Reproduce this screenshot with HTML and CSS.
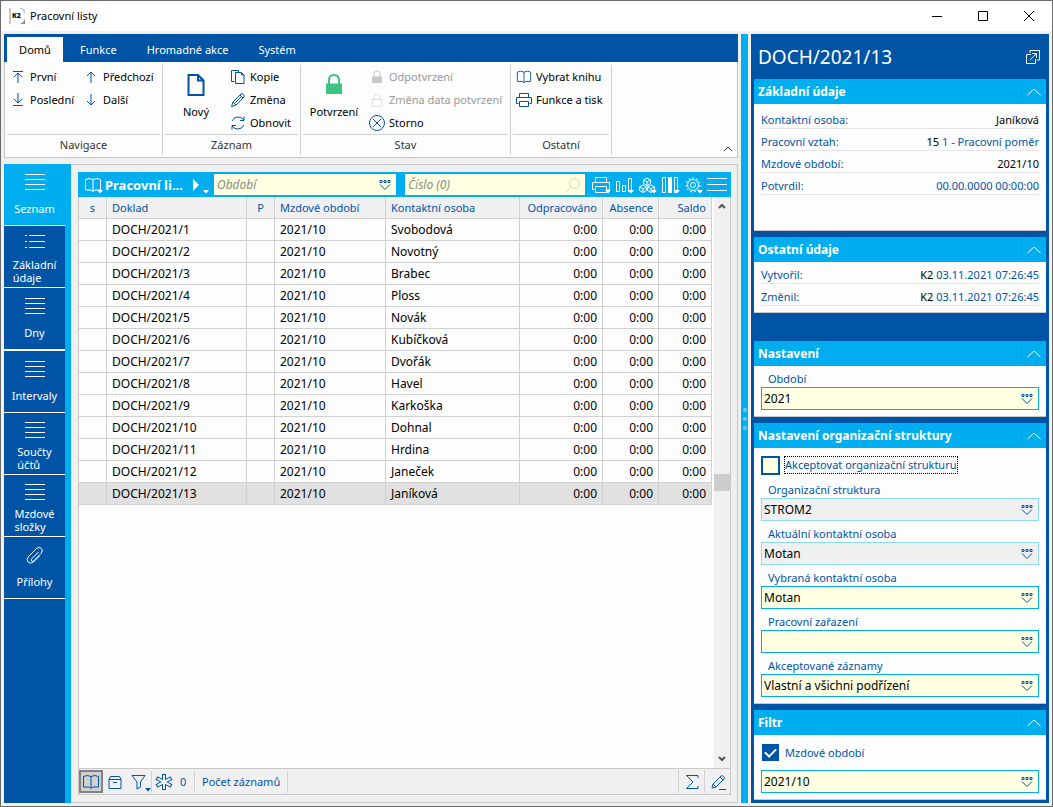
FILE: index.html
```html
<!DOCTYPE html>
<html lang="cs">
<head>
<meta charset="utf-8">
<title>Pracovní listy</title>
<link rel="stylesheet" href="styles.css">
</head>
<body>
<svg class="defs" aria-hidden="true">
  <symbol id="i-lookup" viewBox="0 0 14 12"><path d="M2 1.500h2v2H2zM6 1.500h2v2H6zM10 1.500h2v2h-2z"/><path d="M2 5.500 7 10.500l5-5"/></symbol>
  <symbol id="i-book" viewBox="0 0 18 16"><path d="M9 2.500Q5 .5 1.500 2.500v10.500h5.500l2 1.500 2-1.500h5.500V2.500Q13 .5 9 2.500zV14"/></symbol>
  <symbol id="i-lines" viewBox="0 0 20 18"><path d="M0 1.500h20M0 6.500h20M0 11.500h20M0 16.500h20"/></symbol>
  <symbol id="i-up" viewBox="0 0 16 10"><path d="M1.500 8 8 2l6.500 6"/></symbol>
  <symbol id="i-drop" viewBox="0 0 6 4"><path class="solid" d="M0 0h6L3 3.500z"/></symbol>
</svg>
<div class="window">
  <header class="titlebar">
    <svg class="logo" viewBox="0 0 16 16"><path fill="#c9c9c9" d="M0 0h2v16H0zM10 0q5 2 5 6l1-1V2l-3-2zM16 9v7h-5q4-2 5-7z"/><path fill="#8a8a8a" d="M16 11v5h-5q4-1 5-5z"/><text x="3" y="10" class="logo-text">K2</text></svg>
    <h1 class="title">Pracovní listy</h1>
    <button class="winbtn" aria-label="Minimalizovat"><svg viewBox="0 0 12 12"><path d="M1 6.500h10"/></svg></button>
    <button class="winbtn" aria-label="Maximalizovat"><svg viewBox="0 0 12 12"><path d="M1.500 1.500h9v9h-9z"/></svg></button>
    <button class="winbtn" aria-label="Zavřít"><svg viewBox="0 0 12 12"><path d="m1 1 10 10M11 1 1 11"/></svg></button>
  </header>
  <div class="content">
    <div class="left">
      <nav class="tabs">
        <button class="tab active">Domů</button><button class="tab">Funkce</button><button class="tab">Hromadné akce</button><button class="tab">Systém</button>
      </nav>
      <div class="ribbon">
        <section class="group g-nav">
          <div class="tools">
            <div class="stack">
              <button class="tool"><svg class="i16" viewBox="0 0 16 16"><path d="M3 2.500h10M8 14V4M4 8l4-4 4 4"/></svg>První</button>
              <button class="tool"><svg class="i16" viewBox="0 0 16 16"><path d="M3 13.500h10M8 1v10M4 7l4 4 4-4"/></svg>Poslední</button>
            </div>
            <div class="stack">
              <button class="tool"><svg class="i16" viewBox="0 0 16 16"><path d="M8 14V3M4 7l4-4 4 4"/></svg>Předchozí</button>
              <button class="tool"><svg class="i16" viewBox="0 0 16 16"><path d="M8 2v11M4 9l4 4 4-4"/></svg>Další</button>
            </div>
          </div>
          <h2 class="caption">Navigace</h2>
        </section>
        <section class="group g-rec">
          <div class="tools">
            <button class="big"><svg class="i24 bold" viewBox="0 0 24 24"><path d="M4.500 2H14l5.500 5.500V22h-15zM14 2v5.500h5.500"/></svg>Nový</button>
            <div class="stack">
              <button class="tool"><svg class="i16" viewBox="0 0 16 16"><path d="M4.500 12.500h-3v-11h7v2M5.500 3.500h6l2.500 2.500v8.500H5.500zM11.500 3.500V6H14"/></svg>Kopie</button>
              <button class="tool"><svg class="i16" viewBox="0 0 16 16"><path d="m1.500 14.500 1.500-4.500 8-8q1-1 2.500.5t.5 2.500l-8 8zM3 10l3 3M10 3l3 3M5 11l6-6"/></svg>Změna</button>
              <button class="tool"><svg class="i16" viewBox="0 0 16 16"><path d="M2 6q2-4 6-4t6 3M14 1.500V5.500h-4M14 10q-2 4-6 4t-6-3M2 14.500V10.500h4"/></svg>Obnovit</button>
            </div>
          </div>
          <h2 class="caption">Záznam</h2>
        </section>
        <section class="group g-state">
          <div class="tools">
            <button class="big"><svg class="i24 lock" viewBox="0 0 24 24"><path d="M7 11V7q0-5 5-5t5 5v4"/><path class="solid" d="M4 10.500h16V21H4z"/></svg>Potvrzení</button>
            <div class="stack">
              <button class="tool off" disabled><svg class="i16" viewBox="0 0 16 16"><path d="M5 8V5q0-3 3-3t3 3v3"/><path class="solid" d="M3 7.500h10V14H3z"/></svg>Odpotvrzení</button>
              <button class="tool off" disabled><svg class="i16 faint" viewBox="0 0 16 16"><path d="M5 8V5q0-3 3-3t3 3v3M3 7.500h10V14H3z"/></svg>Změna data potvrzení</button>
              <button class="tool"><svg class="i16" viewBox="0 0 16 16"><circle cx="8" cy="8" r="7.500"/><path d="m4 4 8 8M12 4l-8 8"/></svg>Storno</button>
            </div>
          </div>
          <h2 class="caption">Stav</h2>
        </section>
        <section class="group g-other">
          <div class="tools">
            <div class="stack">
              <button class="tool"><svg class="i16"><use href="#i-book"/></svg>Vybrat knihu</button>
              <button class="tool"><svg class="i16" viewBox="1 0 16 16"><path d="M4.500 5V1.500h9V5M3.500 11.500h-2V5.500h15v6h-2M4.500 9.500h9v5h-9z"/></svg>Funkce a tisk</button>
            </div>
          </div>
          <h2 class="caption">Ostatní</h2>
        </section>
        <button class="collapse" aria-label="Sbalit"><svg viewBox="0 0 10 6"><path d="m1 5 4-4 4 4"/></svg></button>
      </div>
      <div class="work">
        <nav class="side">
          <button class="nav current"><svg><use href="#i-lines"/></svg><span>Seznam</span></button>
          <button class="nav two"><svg viewBox="0 0 20 18"><path d="M0 1.500h2M4 1.500h16M0 7.500h2M4 7.500h16M0 13.500h2M4 13.500h16"/></svg><span>Základní<br>údaje</span></button>
          <button class="nav wide"><svg><use href="#i-lines"/></svg><span>Dny</span></button>
          <button class="nav"><svg><use href="#i-lines"/></svg><span>Intervaly</span></button>
          <button class="nav two"><svg><use href="#i-lines"/></svg><span>Součty<br>účtů</span></button>
          <button class="nav two"><svg><use href="#i-lines"/></svg><span>Mzdové<br>složky</span></button>
          <button class="nav clip"><svg viewBox="0 0 20 20"><path d="m13.500 6-6.500 6.500q-1.500 1.500-.5 2.500t2.500-.5l7-7q2.500-2.500.5-5t-5 0l-8 8q-2.500 3-.5 5.500t5.500 0l6-6"/></svg><span>Přílohy</span></button>
        </nav>
        <main class="panel">
          <div class="grid">
            <div class="gridbar">
              <button class="gb" aria-label="Kniha"><svg viewBox="0 0 18 16"><use href="#i-book"/></svg><svg class="dd"><use href="#i-drop"/></svg></button>
              <strong class="gridname">Pracovní li...</strong>
              <button class="gb" aria-label="Spustit"><svg viewBox="0 0 18 16"><path class="solid" d="M3 2l6 6-6 6z"/></svg><svg class="dd"><use href="#i-drop"/></svg></button>
              <div class="search s1"><input aria-label="Období" placeholder="Období"><button aria-label="Vybrat"><svg class="look"><use href="#i-lookup"/></svg></button></div>
              <div class="search s2"><input aria-label="Číslo" placeholder="Číslo (0)"><button aria-label="Hledat"><svg class="mag" viewBox="0 0 16 16"><circle cx="9.500" cy="6.500" r="5"/><path d="m6 10-5 5"/></svg></button></div>
              <div class="gbs">
                <button class="gb print" aria-label="Tisk"><svg viewBox="0 0 20 18"><path d="M4.500 6V1.500h11V6M3.500 13.500h-2V6.500h17v7h-2M4.500 10.500h11v6h-11z"/></svg><svg class="dd"><use href="#i-drop"/></svg></button>
                <button class="gb" aria-label="Graf"><svg viewBox="0 0 18 16"><path d="M1.500 4.500h3v10h-3zM7.500 8.500h3v6h-3zM13.500 1.500h3v13h-3z"/></svg><svg class="dd"><use href="#i-drop"/></svg></button>
                <button class="gb" aria-label="Kostky"><svg viewBox="0 0 18 16"><path d="m9 1 3.500 2v3.500L9 8.500l-3.500-2V3zM5.500 3 9 5l3.500-2M9 5v3.500M5 8l3.500 2v3.500L5 15.500l-3.500-2V10zM1.500 10 5 12l3.500-2M5 12v3.500M13 8l3.500 2v3.500l-3.500 2-3.500-2V10zM9.500 10l3.500 2 3.500-2M13 12v3.500"/></svg><svg class="dd"><use href="#i-drop"/></svg></button>
                <button class="gb" aria-label="Sloupce"><svg viewBox="0 0 18 16"><path d="M1.500.5h3v15h-3zM13.500.5h3v15h-3z"/><path class="solid" d="M7 0h4v16H7z"/></svg><svg class="dd"><use href="#i-drop"/></svg></button>
                <button class="gb" aria-label="Nastavení"><svg viewBox="0 0 18 16"><circle cx="9" cy="8" r="5.500"/><circle cx="9" cy="8" r="2.500"/><circle class="teeth" cx="9" cy="8" r="7"/></svg><svg class="dd"><use href="#i-drop"/></svg></button>
                <button class="gb menu" aria-label="Menu"><svg viewBox="0 0 20 16"><path d="M0 1.500h20M0 7.500h20M0 13.500h20"/></svg></button>
              </div>
            </div>
            <div class="gridbody">
              <div class="tablewrap">
                <table>
                  <colgroup><col class="c1"><col class="c2"><col class="c3"><col class="c4"><col class="c5"><col class="c6"><col class="c7"><col class="c8"></colgroup>
                  <thead><tr><th class="mid">s</th><th>Doklad</th><th class="mid">P</th><th>Mzdové období</th><th>Kontaktní osoba</th><th class="num">Odpracováno</th><th class="num">Absence</th><th class="num">Saldo</th></tr></thead>
                  <tbody>
                    <tr><td></td><td>DOCH/2021/1</td><td></td><td>2021/10</td><td>Svobodová</td><td class="num">0:00</td><td class="num">0:00</td><td class="num">0:00</td></tr>
                    <tr><td></td><td>DOCH/2021/2</td><td></td><td>2021/10</td><td>Novotný</td><td class="num">0:00</td><td class="num">0:00</td><td class="num">0:00</td></tr>
                    <tr><td></td><td>DOCH/2021/3</td><td></td><td>2021/10</td><td>Brabec</td><td class="num">0:00</td><td class="num">0:00</td><td class="num">0:00</td></tr>
                    <tr><td></td><td>DOCH/2021/4</td><td></td><td>2021/10</td><td>Ploss</td><td class="num">0:00</td><td class="num">0:00</td><td class="num">0:00</td></tr>
                    <tr><td></td><td>DOCH/2021/5</td><td></td><td>2021/10</td><td>Novák</td><td class="num">0:00</td><td class="num">0:00</td><td class="num">0:00</td></tr>
                    <tr><td></td><td>DOCH/2021/6</td><td></td><td>2021/10</td><td>Kubíčková</td><td class="num">0:00</td><td class="num">0:00</td><td class="num">0:00</td></tr>
                    <tr><td></td><td>DOCH/2021/7</td><td></td><td>2021/10</td><td>Dvořák</td><td class="num">0:00</td><td class="num">0:00</td><td class="num">0:00</td></tr>
                    <tr><td></td><td>DOCH/2021/8</td><td></td><td>2021/10</td><td>Havel</td><td class="num">0:00</td><td class="num">0:00</td><td class="num">0:00</td></tr>
                    <tr><td></td><td>DOCH/2021/9</td><td></td><td>2021/10</td><td>Karkoška</td><td class="num">0:00</td><td class="num">0:00</td><td class="num">0:00</td></tr>
                    <tr><td></td><td>DOCH/2021/10</td><td></td><td>2021/10</td><td>Dohnal</td><td class="num">0:00</td><td class="num">0:00</td><td class="num">0:00</td></tr>
                    <tr><td></td><td>DOCH/2021/11</td><td></td><td>2021/10</td><td>Hrdina</td><td class="num">0:00</td><td class="num">0:00</td><td class="num">0:00</td></tr>
                    <tr><td></td><td>DOCH/2021/12</td><td></td><td>2021/10</td><td>Janeček</td><td class="num">0:00</td><td class="num">0:00</td><td class="num">0:00</td></tr>
                    <tr class="selected"><td></td><td>DOCH/2021/13</td><td></td><td>2021/10</td><td>Janíková</td><td class="num">0:00</td><td class="num">0:00</td><td class="num">0:00</td></tr>
                  </tbody>
                </table>
              </div>
              <div class="scroll">
                <svg viewBox="0 0 8 6"><path d="m1 5 3-3 3 3"/></svg>
                <div class="track"><div class="before"></div><div class="thumb"></div><div class="after"></div></div>
                <svg viewBox="0 0 8 6"><path d="m1 1 3 3 3-3"/></svg>
              </div>
            </div>
            <footer class="status">
              <button class="sb pressed" aria-label="Kniha"><svg viewBox="0 0 18 16"><use href="#i-book"/></svg></button>
              <button class="sb" aria-label="Kontejner"><svg viewBox="0 0 18 16"><path d="M3 5.500V14.500h12V5.500zM3 5.500l1.500-3h9l1.500 3M7 8.500h4"/></svg></button>
              <button class="sb" aria-label="Filtr"><svg viewBox="0 0 18 16"><path d="M2 1.500h13L10.500 8v5L7 15V8z"/></svg><svg class="dd"><use href="#i-drop"/></svg></button>
              <button class="count"><svg viewBox="0 0 18 16"><path class="star" d="M9 0v16M1.500 4l15 8M16.500 4l-15 8"/><path class="star-in" d="M9 1v14M2.500 4.500l13 7M15.500 4.500l-13 7"/></svg>0</button>
              <button class="records">Počet záznamů</button>
              <span class="grow"></span>
              <button class="sb end" aria-label="Součet"><svg viewBox="0 0 18 16"><path d="M15 4V1.500H3.500L10 8l-6.500 6.500H15V12"/></svg></button>
              <button class="sb end" aria-label="Upravit"><svg viewBox="0 0 18 16"><path d="m3 14 1-4 8-8q1-1 2.500.5T15 5l-8 8zM4 10l3 3M11 3l3 3M10 15.500h7"/></svg></button>
            </footer>
          </div>
        </main>
      </div>
    </div>
    <div class="splitter"><i></i><i></i><i></i></div>
    <aside class="preview">
      <div class="phead"><h2>DOCH/2021/13</h2><button aria-label="Otevřít"><svg viewBox="0 0 16 16"><path d="M5 4V1.500h9.500V11H12M6 5.500H1.500v9h9V10M5 11l6-6M7 4.500h4.500V9"/></svg></button></div>
      <section class="card basic">
        <div class="chead"><h3>Základní údaje</h3><button aria-label="Sbalit"><svg><use href="#i-up"/></svg></button></div>
        <dl class="facts">
          <div><dt>Kontaktní osoba:</dt><dd>Janíková</dd></div>
          <div><dt>Pracovní vztah:</dt><dd>15 <a href="#">1 - Pracovní poměr</a></dd></div>
          <div><dt>Mzdové období:</dt><dd>2021/10</dd></div>
          <div><dt>Potvrdil:</dt><dd><a href="#">00.00.0000 00:00:00</a></dd></div>
        </dl>
      </section>
      <section class="card">
        <div class="chead"><h3>Ostatní údaje</h3><button aria-label="Sbalit"><svg><use href="#i-up"/></svg></button></div>
        <dl class="facts">
          <div><dt>Vytvořil:</dt><dd>K2 <a href="#">03.11.2021 07:26:45</a></dd></div>
          <div><dt>Změnil:</dt><dd>K2 <a href="#">03.11.2021 07:26:45</a></dd></div>
        </dl>
      </section>
      <section class="card settings">
        <div class="chead"><h3>Nastavení</h3><button aria-label="Sbalit"><svg><use href="#i-up"/></svg></button></div>
        <div class="form">
          <label for="f1">Období</label>
          <div class="field"><input id="f1" value="2021"><button aria-label="Vybrat"><svg class="look"><use href="#i-lookup"/></svg></button></div>
        </div>
      </section>
      <section class="card">
        <div class="chead"><h3>Nastavení organizační struktury</h3><button aria-label="Sbalit"><svg><use href="#i-up"/></svg></button></div>
        <div class="form">
          <div class="check org"><input type="checkbox" id="k1"><label for="k1" class="focused">Akceptovat organizační strukturu</label></div>
          <label for="f2">Organizační struktura</label>
          <div class="field ro"><input id="f2" value="STROM2" readonly><button aria-label="Vybrat"><svg class="look"><use href="#i-lookup"/></svg></button></div>
          <label for="f3">Aktuální kontaktní osoba</label>
          <div class="field ro"><input id="f3" value="Motan" readonly><button aria-label="Vybrat"><svg class="look"><use href="#i-lookup"/></svg></button></div>
          <label for="f4">Vybraná kontaktní osoba</label>
          <div class="field"><input id="f4" value="Motan"><button aria-label="Vybrat"><svg class="look"><use href="#i-lookup"/></svg></button></div>
          <label for="f5">Pracovní zařazení</label>
          <div class="field"><input id="f5" value=""><button aria-label="Vybrat"><svg class="look"><use href="#i-lookup"/></svg></button></div>
          <label for="f6">Akceptované záznamy</label>
          <div class="field"><input id="f6" value="Vlastní a všichni podřízení"><button aria-label="Vybrat"><svg class="look"><use href="#i-lookup"/></svg></button></div>
        </div>
      </section>
      <section class="card">
        <div class="chead"><h3>Filtr</h3><button aria-label="Sbalit"><svg><use href="#i-up"/></svg></button></div>
        <div class="form">
          <div class="check period"><input type="checkbox" id="k2" checked><label for="k2">Mzdové období</label></div>
          <div class="field"><input aria-label="Hodnota období" value="2021/10"><button aria-label="Vybrat"><svg class="look"><use href="#i-lookup"/></svg></button></div>
        </div>
      </section>
    </aside>
  </div>
</div>
</body>
</html>
```
FILE: styles.css
```css
:root {
  --navy: #0054a6;
  --cyan: #00aeef;
  --line: #d0d0d0;
  --paper: #fdfdfd;
  --chrome: #f0f0f0;
  --cream: #ffffe1;
}
* { box-sizing: border-box; }
body {
  margin: 0;
  font: 11px/16px "Noto Sans", "Open Sans", sans-serif;
  color: #000;
}
button, input { font: inherit; color: inherit; margin: 0; padding: 0; border: 0; background: none; }
h1, h2, h3, dl, dd { margin: 0; font-size: inherit; font-weight: normal; }
a { color: var(--navy); text-decoration: none; }
svg { fill: none; stroke: var(--navy); stroke-width: 1; flex: none; }
.solid { fill: currentColor; stroke: none; }
.defs { position: absolute; width: 0; height: 0; }

.window { min-height: 100vh; display: flex; flex-direction: column; border: 1px solid #6b6b6b; background: var(--chrome); }
.titlebar { display: flex; align-items: center; height: 30px; background: #fff; padding-left: 8px; }
.logo { width: 16px; height: 16px; stroke: none; }
.logo-text { fill: #111; font: 800 7px "Open Sans", sans-serif; }
.title { flex: 1; padding-left: 5px; }
.winbtn { width: 46px; height: 30px; }
.winbtn svg { width: 12px; height: 12px; stroke: #000; display: block; margin: auto; }

.content { flex: 1; display: flex; gap: 3px; padding: 3px; }
.left { flex: 1; min-width: 0; display: flex; flex-direction: column; }
.tabs { display: flex; height: 28px; background: var(--navy); padding: 3px 3px 0; color: #fff; }
.tab { padding: 0 15px; }
.tab.active { background: var(--paper); color: #000; padding: 0 12px; width: 56px; margin-right: 2px; }
.ribbon { position: relative; display: flex; height: 96px; padding-top: 3px; background: var(--paper); border: 1px solid #c8c8c8; border-top: 0; }
.group { height: 90px; border-right: 1px solid var(--line); padding: 0 2px; display: flex; flex-direction: column; }
.g-nav { width: 158px; }
.g-rec { width: 138px; }
.g-state { width: 210px; }
.g-other { width: 101px; }
.tools { display: flex; height: 70px; border-bottom: 1px solid var(--line); }
.caption { text-align: center; line-height: 20px; color: #333; }
.stack { display: flex; flex-direction: column; }
.tool { display: flex; align-items: center; gap: 4px; height: 23px; white-space: nowrap; }
.i16 { width: 16px; height: 16px; }
.i24 { width: 24px; height: 24px; }
.bold { stroke-width: 2; }
.lock { stroke: #3fc380; stroke-width: 2; color: #3fc380; }
.off { color: #999; }
.off svg { stroke: #c8c8c8; color: #c8c8c8; }
.off .faint { stroke: #ddd; }
.g-nav .tool { padding-left: 3px; }
.g-nav .stack { width: 73px; }
.big { display: flex; flex-direction: column; align-items: center; gap: 7px; width: 62px; padding-top: 8px; height: 69px; }
.g-rec .stack { margin-left: 3px; }
.g-state .stack { margin-left: 4px; }
.g-other .stack { margin-left: 3px; }
.collapse { position: absolute; right: 3px; bottom: 3px; width: 12px; height: 10px; display: flex; align-items: center; justify-content: center; }
.collapse svg { width: 10px; height: 6px; stroke: #333; }

.work { flex: 1; display: flex; padding-top: 6px; }
.side { width: 67px; background: var(--navy); border-right: 6px solid var(--cyan); color: #fff; line-height: 13px; }
.nav { display: flex; flex-direction: column; align-items: center; width: 100%; height: 62px; padding-top: 9px; border-bottom: 1px solid #fff; gap: 11px; }
.nav svg { width: 20px; height: 18px; stroke: #fff; }
.nav span { text-align: left; }
.nav.two { padding-top: 8px; gap: 6px; }
.nav.wide { height: 63px; border-bottom-width: 2px; }
.nav.clip { gap: 9px; }
.nav.clip svg { height: 20px; }
.nav.current { background: var(--cyan); }
.panel { flex: 1; min-width: 0; display: flex; padding: 7px 6px 7px 7px; border: 1px solid #c8c8c8; border-left: 0; }
.grid { flex: 1; min-width: 0; display: flex; flex-direction: column; border: 1px solid #c8c8c8; border-top: 0; }
.gridbar { display: flex; align-items: center; height: 25px; margin: 0 -1px; padding: 0 2px 0 3px; background: var(--cyan); color: #fff; }
.gridbar svg { stroke: #fff; }
.gb { position: relative; display: flex; flex: none; align-items: center; justify-content: center; width: 23px; height: 25px; }
.gb svg { width: 18px; height: 16px; }
.gb.print svg { width: 20px; height: 18px; }
.dd, .gb svg.dd, .gb.print svg.dd { position: absolute; width: 6px; height: 4px; right: 1px; bottom: 3px; }
.teeth { stroke-dasharray: 2 2; }
.gridname { flex: none; width: 83px; padding-left: 1px; font-size: 13px; white-space: nowrap; }
.search { display: flex; align-items: center; height: 21px; background: var(--cream); }
.search input { flex: 1; min-width: 0; padding-left: 3px; font-size: 12px; font-style: italic; color: #333; outline: none; }
.search input::placeholder { color: #8c8c84; opacity: 1; }
.search button { display: flex; margin-right: 4px; }
.s1 { flex: none; width: 182px; margin-left: 4px; }
.s2 { flex: 1; min-width: 0; margin-left: 9px; }
.look, .gridbar .look { width: 14px; height: 12px; stroke: var(--navy); }
.gridbar .mag { width: 16px; height: 16px; stroke: #d8d8c4; }
.gbs { display: flex; flex: none; margin-left: 4px; }
.gb.menu { border-left: 1px solid #1c9ad0; width: 25px; }
.gb.menu svg { width: 20px; }
.gridbody { flex: 1; display: flex; background: var(--paper); }
.tablewrap { flex: 1; min-width: 0; }
table { table-layout: fixed; border-collapse: separate; border-spacing: 0; width: 100%; }
th, td { height: 22px; padding: 0 5px; border-right: 1px solid var(--line); border-bottom: 1px solid var(--line); text-align: left; white-space: nowrap; font-size: 12px; line-height: 16px; }
th { background: var(--chrome); color: var(--navy); font-weight: normal; font-size: 11px; }
th.num, td.num { text-align: right; }
th.mid { text-align: center; }
.c1, .c3 { width: 28px; }
.c2 { width: 140px; }
.c4 { width: 111px; }
.c6 { width: 83px; }
.c7 { width: 56px; }
.c8 { width: 53px; }
.selected td { background: #e0e0e0; }
.scroll { width: 18px; display: flex; flex-direction: column; align-items: center; background: var(--chrome); padding: 6px 0; border-left: 2px solid var(--paper); }
.scroll svg { width: 8px; height: 6px; stroke: #555; stroke-width: 2; }
.track { flex: 1; width: 100%; display: flex; flex-direction: column; }
.before { flex: 266; }
.after { flex: 267; }
.thumb { height: 17px; background: #cdcdcd; }
.status { display: flex; align-items: center; height: 26px; border-top: 1px solid #c8c8c8; color: var(--navy); }
.sb { position: relative; display: flex; align-items: center; justify-content: center; width: 24px; height: 23px; }
.sb svg, .count svg { width: 18px; height: 16px; }
.sb svg.dd { width: 6px; height: 4px; right: 0; bottom: 1px; color: var(--navy); }
.pressed { border: 2px solid #808080; background: #d0d0d0; }
.count { display: flex; align-items: center; gap: 7px; height: 22px; width: 44px; padding-left: 3px; border: solid var(--line); border-width: 0 1px; }
.star { stroke-width: 4; }
.star-in { stroke: #f0f0f0; stroke-width: 2; }
.records { height: 22px; padding: 0 7px; border-right: 1px solid var(--line); }
.grow { flex: 1; }
.end { border-left: 1px solid var(--line); width: 26px; }

.splitter { width: 7px; background: var(--cyan); display: flex; flex-direction: column; align-items: center; justify-content: center; gap: 5px; }
.splitter i { width: 4px; height: 4px; border-radius: 2px; background: #66cef5; }

.preview { width: 298px; padding: 0 3px 3px; background: var(--navy); }
.phead { display: flex; align-items: center; height: 45px; padding: 0 5px 0 4px; color: #fff; }
.phead h2 { flex: 1; font-size: 19px; line-height: 24px; }
.phead svg { width: 16px; height: 16px; stroke: #fff; display: block; }
.card { background: var(--paper); margin-bottom: 6px; border-bottom: 1px solid #c8c8c8; }
.card:last-child { margin-bottom: 0; }
.chead { display: flex; align-items: center; height: 25px; background: var(--cyan); color: #fff; padding-left: 4px; }
.chead h3 { flex: 1; font-size: 12px; font-weight: bold; }
.chead button { display: flex; align-items: center; justify-content: center; width: 25px; height: 21px; border-left: 1px solid #1c9ad0; }
.chead svg { width: 16px; height: 10px; stroke: #fff; }
.facts { padding: 0 7px 6px; }
.facts div { display: flex; justify-content: space-between; height: 22px; padding-top: 4px; border-bottom: 1px solid #e6e6e6; line-height: 17px; }
.facts dt { color: var(--navy); }
.basic .facts { padding-top: 3px; padding-bottom: 35px; }
.settings { margin-top: 28px; }
.form { padding: 0 7px 6px; }
.form > label { display: block; height: 21px; padding: 5px 0 0 7px; color: var(--navy); }
.field { display: flex; align-items: center; height: 23px; border: 1px solid var(--cyan); background: var(--cream); }
.field input { flex: 1; min-width: 0; padding-left: 2px; font-size: 12px; outline: none; }
.field button { display: flex; margin-right: 4px; }
.field.ro { background: var(--chrome); border-color: #8cdcf8; }
.check { display: flex; align-items: center; color: var(--navy); gap: 5px; }
.check.org { height: 29px; padding-top: 5px; }
.check.period { height: 35px; gap: 6px; padding-left: 1px; }
.check input { appearance: none; width: 19px; height: 19px; border: 2px solid var(--navy); background: var(--cream); }
.check input:checked { width: 17px; height: 17px; background: var(--navy); display: flex; align-items: center; justify-content: center; }
.check input:checked::before { content: ""; width: 5px; height: 9px; margin-bottom: 3px; border: solid #fff; border-width: 0 2px 2px 0; transform: rotate(45deg); }
.focused { outline: 1px dotted #000; }
```
